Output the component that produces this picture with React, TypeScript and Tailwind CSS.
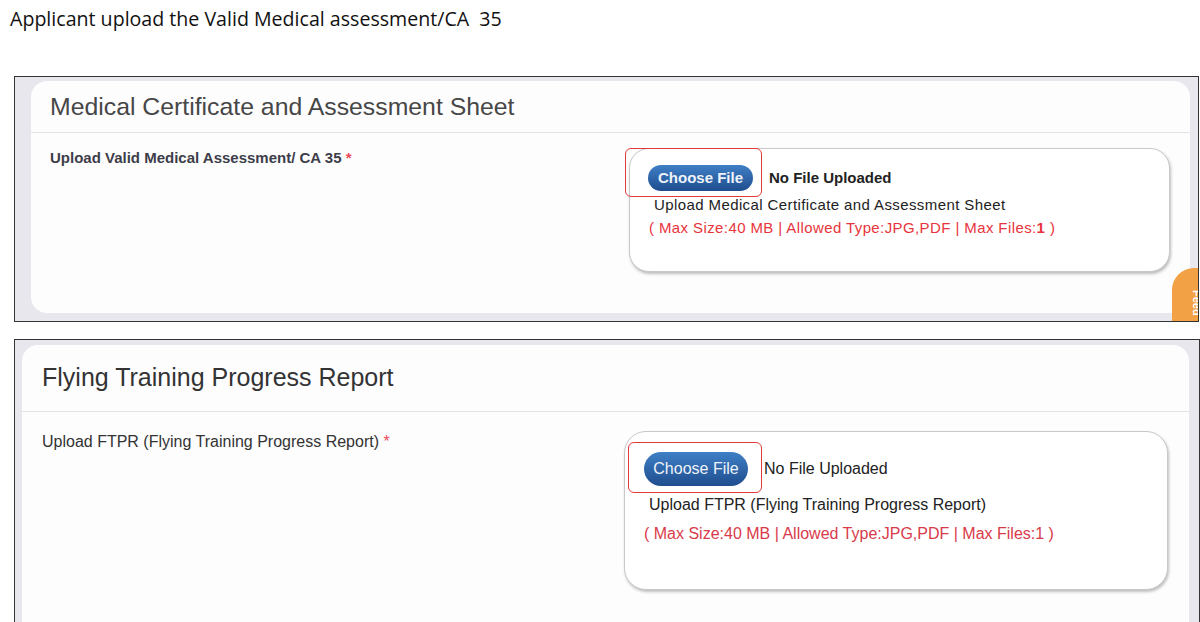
import React from "react";

const arial = { fontFamily: '"Liberation Sans", Arial, sans-serif' };

export default function App() {
  return (
    <div className="relative w-[1200px] h-[622px] overflow-hidden bg-white" style={arial}>
      <div
        className="pl-[10px] pt-[6px] text-[19.6px] leading-[26px] text-[#111]"
        style={{ fontFamily: '"Open Sans", sans-serif' }}
      >
        Applicant upload the Valid Medical assessment/CA&nbsp; 35
      </div>

      {/* first screenshot */}
      <div className="relative ml-[14px] mt-[44px] flex h-[246px] w-[1185px] border border-[#333] bg-[#e7e7ed] pb-[8px] pl-[16px] pr-[8px] pt-[4px]">
        <div className="flex flex-1 flex-col rounded-[16px] bg-[#fdfdfe]">
          <div className="flex h-[52px] items-center border-b border-[#e3e3e6] pl-[19px] text-[24.8px] text-[#474747]">
            Medical Certificate and Assessment Sheet
          </div>
          <div className="flex pl-[19px] pt-[15px]">
            <div className="w-[579px] pt-[1px] text-[15px] leading-[17px] font-bold text-[#3d3d4a]">
              Upload Valid Medical Assessment/ CA 35 <span className="text-[#e84a5a]">*</span>
            </div>
            <div className="relative h-[124px] w-[541px] rounded-[20px] border border-[#c9c9cc] bg-white pl-[18px] pt-[16px] shadow-[1px_2px_3px_rgba(0,0,0,0.25)]">
              <div className="pointer-events-none absolute left-[-5px] top-[-1px] h-[49px] w-[137px] rounded-[6px] border-[1.5px] border-[#e03a3a]" />
              <div className="flex items-center gap-[16px]">
                <button className="h-[26px] w-[105px] rounded-full bg-gradient-to-b from-[#3f7fc6] to-[#1f4e8e] text-[15px] font-bold text-[#eef3fa]">
                  Choose File
                </button>
                <span className="text-[15px] font-bold text-[#222]">No File Uploaded</span>
              </div>
              <div className="mt-[5px] pl-[6px] text-[15px] leading-[17px] tracking-[0.4px] text-[#222]">
                Upload Medical Certificate and Assessment Sheet
              </div>
              <div className="mt-[6px] pl-[1px] text-[15px] leading-[17px] tracking-[0.4px] text-[#e8343c]">
                ( Max Size:40 MB | Allowed Type:JPG,PDF | Max Files:<span className="font-bold">1</span> )
              </div>
            </div>
          </div>
        </div>
        <div className="absolute bottom-0 right-0 h-[53px] w-[26px] overflow-hidden rounded-tl-[22px] bg-[#f2a145]">
          <span className="absolute left-[19px] top-[22px] text-[11px] font-bold leading-[11px] text-white [writing-mode:vertical-rl]">
            Feed
          </span>
        </div>
      </div>

      {/* second screenshot */}
      <div className="ml-[14px] mt-[17px] flex h-[300px] w-[1186px] border border-[#333] bg-[#e7e7ed] pl-[7px] pr-[10px] pt-[5px]">
        <div className="flex flex-1 flex-col rounded-t-[16px] bg-[#fdfdfe]">
          <div className="flex h-[67px] items-center border-b border-[#e3e3e6] pl-[20px] text-[25px] text-[#333]">
            Flying Training Progress Report
          </div>
          <div className="flex pl-[20px] pt-[19px]">
            <div className="w-[582px] pt-[2px] text-[16px] leading-[18px] text-[#333]">
              Upload FTPR (Flying Training Progress Report) <span className="text-[#e84a5a]">*</span>
            </div>
            <div className="relative h-[159px] w-[544px] rounded-[22px] border border-[#c9c9cc] bg-white pl-[19px] pt-[20px] shadow-[1px_2px_3px_rgba(0,0,0,0.25)]">
              <div className="pointer-events-none absolute left-[3px] top-[10px] h-[51px] w-[134px] rounded-[6px] border-[1.5px] border-[#e03a3a]" />
              <div className="flex items-center gap-[16px]">
                <button className="h-[34px] w-[104px] rounded-full bg-gradient-to-b from-[#3f7fc6] to-[#1f4e8e] text-[16px] text-[#eef3fa]">
                  Choose File
                </button>
                <span className="text-[16px] text-[#222]">No File Uploaded</span>
              </div>
              <div className="mt-[10px] pl-[5px] text-[16px] leading-[18px] text-[#222]">
                Upload FTPR (Flying Training Progress Report)
              </div>
              <div className="mt-[11px] text-[16px] leading-[18px] text-[#d93a4a]">
                ( Max Size:40 MB | Allowed Type:JPG,PDF | Max Files:1 )
              </div>
            </div>
          </div>
        </div>
      </div>
    </div>
  );
}
